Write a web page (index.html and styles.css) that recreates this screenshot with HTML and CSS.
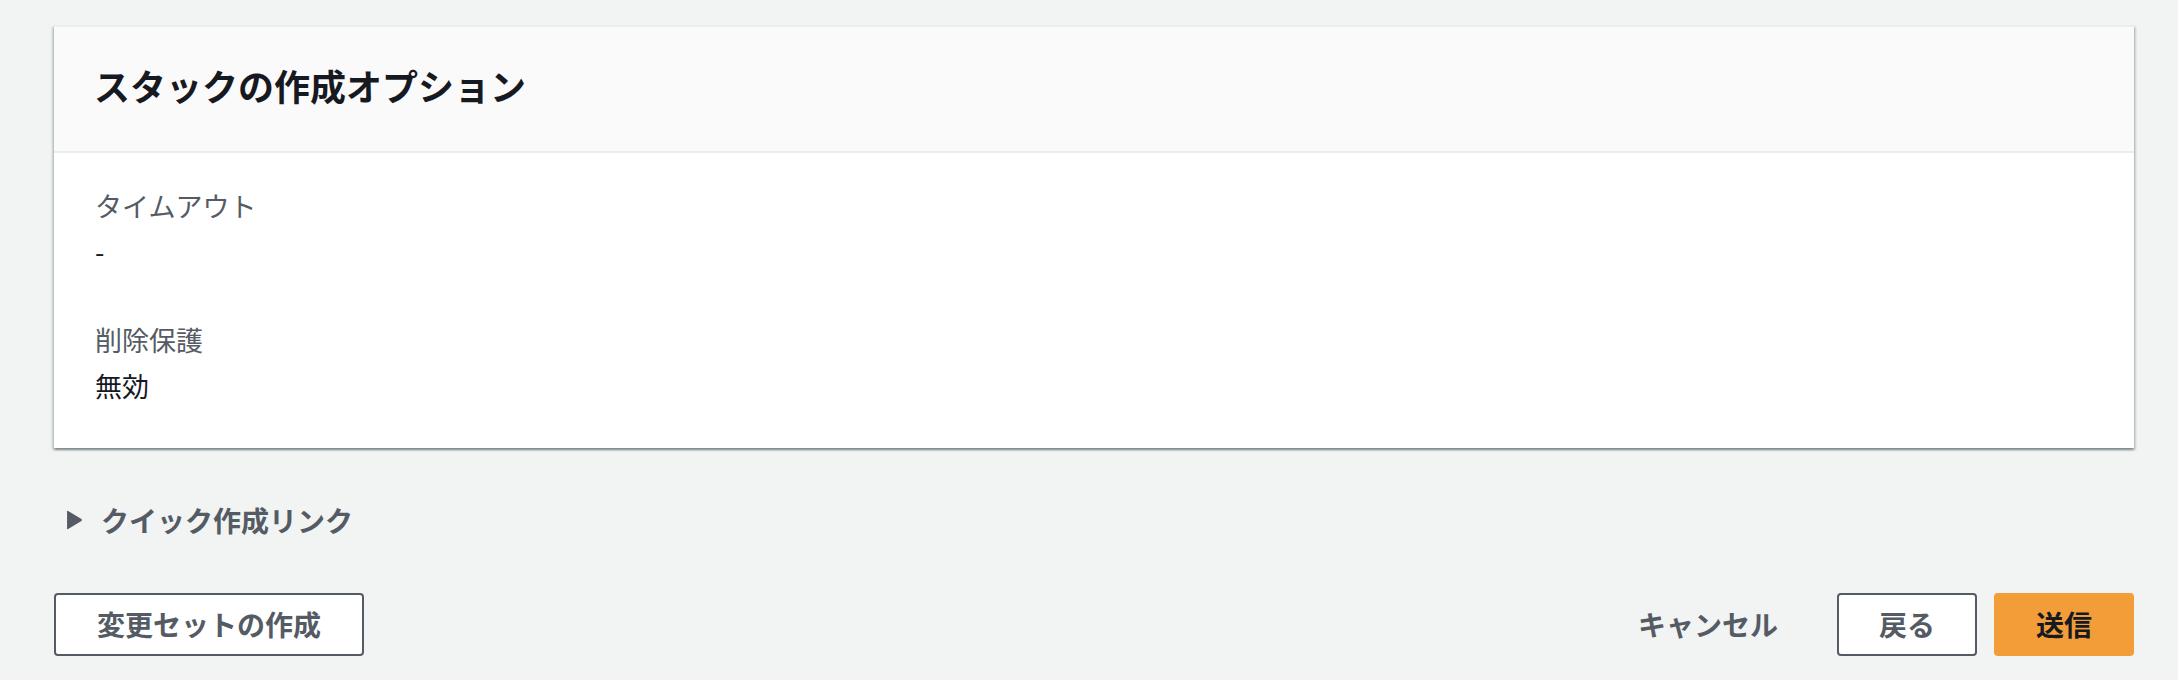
FILE: index.html
```html
<!DOCTYPE html>
<html lang="ja">
<head>
<meta charset="utf-8">
<title>スタックの作成オプション</title>
<link rel="stylesheet" href="styles.css">
</head>
<body>
<div class="page">
  <section class="card">
    <header class="card-header">
      <h2 class="card-title">スタックの作成オプション</h2>
    </header>
    <div class="card-body">
      <div class="field">
        <div class="field-label">タイムアウト</div>
        <div class="field-value">-</div>
      </div>
      <div class="field">
        <div class="field-label">削除保護</div>
        <div class="field-value">無効</div>
      </div>
    </div>
  </section>

  <div class="expander">
    <svg class="caret" width="17" height="22" viewBox="0 0 16 20" aria-hidden="true">
      <path d="M2 1.5 L14.5 9 Q15.5 10 14.5 11 L2 18.5 Q1 19 1 18 L1 2 Q1 1 2 1.5 Z" fill="#545b64"/>
    </svg>
    <span class="expander-label">クイック作成リンク</span>
  </div>

  <div class="actions">
    <button class="btn btn-normal btn-wide">変更セットの作成</button>
    <div class="actions-right">
      <button class="btn btn-link">キャンセル</button>
      <button class="btn btn-normal">戻る</button>
      <button class="btn btn-primary">送信</button>
    </div>
  </div>
</div>
</body>
</html>
```

FILE: styles.css
```css
html, body {
  margin: 0;
  padding: 0;
  background: #f2f3f3;
}

body {
  font-family: "Noto Sans CJK JP", "Noto Sans", sans-serif;
  color: #16191f;
  font-size: 28px;
}

.page {
  padding: 25px 44px 0 54px;
}

.card {
  background: #ffffff;
  border-top: 2px solid #eaeded;
  box-shadow: 0 2px 2px 0 rgba(0, 28, 36, 0.3),
              2px 2px 2px 0 rgba(0, 28, 36, 0.15),
              -2px 2px 2px 0 rgba(0, 28, 36, 0.15);
}

.card-header {
  background: #fafafa;
  border-bottom: 2px solid #eaeded;
  padding: 36px 40px 44px 40px;
}

.card-title {
  margin: 0;
  font-size: 36px;
  line-height: 44px;
  font-weight: 700;
  color: #16191f;
}

.card-body {
  padding: 30px 40px 39px 41px;
  display: flex;
  flex-direction: column;
  gap: 42px;
}

.field-label {
  color: #545b64;
  font-size: 27px;
  line-height: 46px;
}

.field-value {
  color: #16191f;
  font-size: 27px;
  line-height: 46px;
}

.expander {
  margin-top: 50px;
  display: flex;
  align-items: center;
  height: 44px;
  padding-left: 12px;
  gap: 18px;
}

.caret {
  display: block;
}

.expander-label {
  font-weight: 700;
  font-size: 28px;
  line-height: 44px;
  color: #545b64;
}

.actions {
  margin-top: 51px;
  display: flex;
  justify-content: space-between;
  align-items: center;
}

.actions-right {
  display: flex;
  align-items: center;
  gap: 17px;
}

.btn {
  font-family: inherit;
  font-size: 28px;
  font-weight: 700;
  line-height: 43px;
  padding: 8px 40px;
  border-radius: 4px;
  border: 2px solid transparent;
  cursor: pointer;
}

.btn-wide {
  padding: 8px 41px;
}

.btn-normal {
  background: #ffffff;
  border-color: #545b64;
  color: #545b64;
}

.btn-link {
  background: transparent;
  color: #545b64;
}

.btn-primary {
  background: #f29d38;
  border-color: #f29d38;
  color: #16191f;
}
```
